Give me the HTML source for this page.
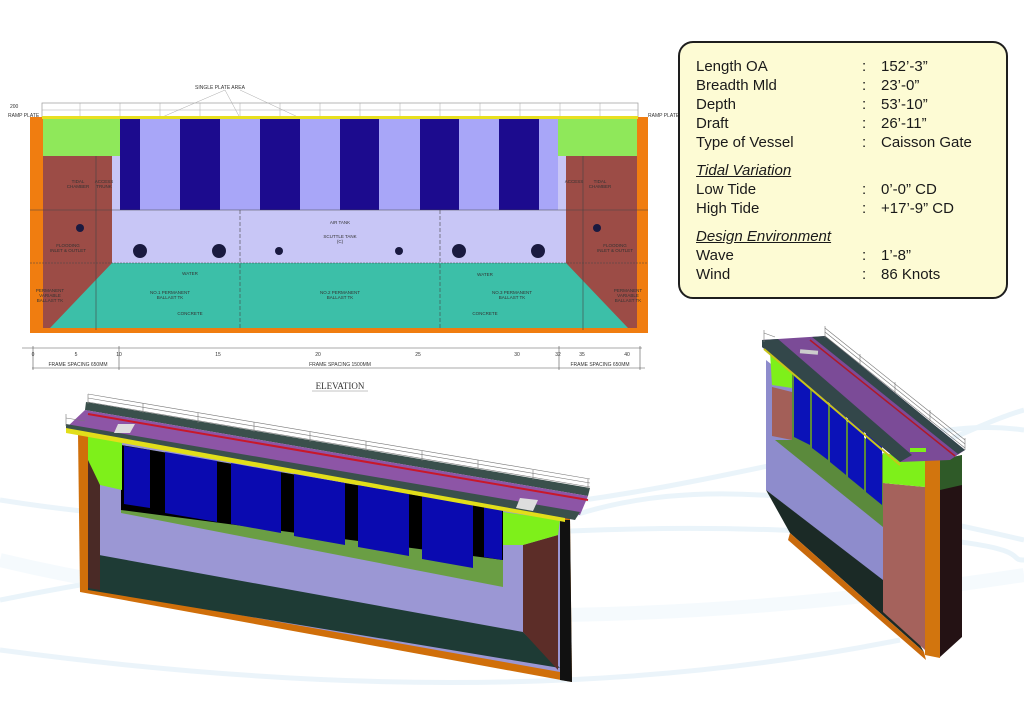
<!DOCTYPE html>
<html><head><meta charset="utf-8"><style>
html,body{margin:0;padding:0;background:#fff;}
body{width:1024px;height:723px;overflow:hidden;position:relative;font-family:"Liberation Sans",sans-serif;}
.box{position:absolute;left:678px;top:41px;width:326px;height:254px;background:#fdfbd4;border:2px solid #1e1e1e;border-radius:15px;}
.r{position:absolute;left:16px;font-size:15px;color:#1a1a1a;line-height:19px;white-space:nowrap;}
.r .c{position:absolute;left:166px;}
.r .v{position:absolute;left:185px;}
.h{font-style:italic;text-decoration:underline;}
svg{position:absolute;left:0;top:0;}
</style></head><body>
<svg width="1024" height="723" viewBox="0 0 1024 723">
<g fill="none" stroke="#e2f0f8" stroke-width="5" opacity="0.7">
<path d="M0 600 C200 560 500 520 780 530 S1000 560 1024 560"/>
<path d="M0 500 C250 540 500 520 700 480 S950 420 1024 430"/>
<path d="M560 520 C700 470 850 500 1024 540"/>
<path d="M0 650 C300 690 600 700 900 640"/>
<path d="M880 470 C950 440 990 420 1024 410"/>
</g>
<g fill="none" stroke="#eef6fb" stroke-width="14" opacity="0.6">
<path d="M0 560 C250 620 600 640 1024 575"/>
</g>
<rect x="42" y="103" width="596" height="14" fill="#fff" stroke="#999" stroke-width="0.7"/>
<g stroke="#aaa" stroke-width="0.5">
<line x1="80" y1="103" x2="80" y2="117"/><line x1="120" y1="103" x2="120" y2="117"/><line x1="160" y1="103" x2="160" y2="117"/><line x1="200" y1="103" x2="200" y2="117"/><line x1="240" y1="103" x2="240" y2="117"/><line x1="280" y1="103" x2="280" y2="117"/><line x1="320" y1="103" x2="320" y2="117"/><line x1="360" y1="103" x2="360" y2="117"/><line x1="400" y1="103" x2="400" y2="117"/><line x1="440" y1="103" x2="440" y2="117"/><line x1="480" y1="103" x2="480" y2="117"/><line x1="520" y1="103" x2="520" y2="117"/><line x1="560" y1="103" x2="560" y2="117"/><line x1="600" y1="103" x2="600" y2="117"/>
<line x1="42" y1="110" x2="638" y2="110"/>
<line x1="160" y1="118" x2="225" y2="90"/><line x1="225" y1="90" x2="240" y2="118"/><line x1="240" y1="90" x2="300" y2="118"/>
</g>
<text x="195" y="89" font-size="5" fill="#333">SINGLE PLATE AREA</text>
<text x="10" y="108" font-size="5" fill="#333">200</text>
<text x="8" y="117" font-size="5" fill="#333">RAMP PLATE</text>
<text x="648" y="117" font-size="5" fill="#333">RAMP PLATE</text>
<rect x="30" y="117" width="618" height="216" fill="#f07d10"/>
<rect x="42" y="116" width="596" height="3" fill="#e8e020"/>
<rect x="43" y="119" width="594" height="208" fill="#c8c6f6"/>
<rect x="43" y="119" width="77" height="37" fill="#8fe85a"/>
<rect x="558" y="119" width="79" height="37" fill="#8fe85a"/>
<rect x="43" y="156" width="69" height="172" fill="#9c4c46"/>
<rect x="566" y="156" width="71" height="172" fill="#9c4c46"/>
<rect x="120" y="119" width="438" height="91" fill="#a8a6f8"/>
<g fill="#1c0b8e">
<rect x="120" y="119" width="20" height="91"/><rect x="180" y="119" width="40" height="91"/><rect x="260" y="119" width="40" height="91"/><rect x="340" y="119" width="39" height="91"/><rect x="420" y="119" width="39" height="91"/><rect x="499" y="119" width="40" height="91"/>
</g>
<polygon points="112,263 566,263 628,328 50,328" fill="#3cbfa8"/>
<g stroke="#444" stroke-width="0.6" fill="none">
<line x1="30" y1="210" x2="648" y2="210"/><line x1="30" y1="263" x2="648" y2="263" stroke-dasharray="2,1"/>
<line x1="240" y1="210" x2="240" y2="330" stroke-dasharray="4,2"/><line x1="440" y1="210" x2="440" y2="330" stroke-dasharray="4,2"/>
<line x1="96" y1="156" x2="96" y2="330"/><line x1="583" y1="156" x2="583" y2="330"/>
</g>
<g fill="#1a1a40">
<circle cx="140" cy="251" r="7"/><circle cx="219" cy="251" r="7"/><circle cx="279" cy="251" r="4"/><circle cx="399" cy="251" r="4"/><circle cx="459" cy="251" r="7"/><circle cx="538" cy="251" r="7"/><circle cx="80" cy="228" r="4"/><circle cx="597" cy="228" r="4"/>
</g>
<g font-size="4.5" fill="#333" text-anchor="middle">
<text x="78" y="183">TIDAL</text><text x="78" y="188">CHAMBER</text><text x="104" y="183">ACCESS</text><text x="104" y="188">TRUNK</text>
<text x="574" y="183">ACCESS</text><text x="600" y="183">TIDAL</text><text x="600" y="188">CHAMBER</text>
<text x="340" y="224">AIR TANK</text><text x="340" y="238">SCUTTLE TANK</text><text x="340" y="243">(C)</text>
<text x="68" y="247">FLOODING</text><text x="68" y="252">INLET &amp; OUTLET</text><text x="615" y="247">FLOODING</text><text x="615" y="252">INLET &amp; OUTLET</text>
<text x="190" y="275">WATER</text><text x="485" y="276">WATER</text>
<text x="170" y="294">NO.1 PERMANENT</text><text x="170" y="299">BALLAST TK</text><text x="340" y="294">NO.2 PERMANENT</text><text x="340" y="299">BALLAST TK</text><text x="512" y="294">NO.3 PERMANENT</text><text x="512" y="299">BALLAST TK</text>
<text x="190" y="315">CONCRETE</text><text x="485" y="315">CONCRETE</text>
<text x="50" y="292">PERMANENT</text><text x="50" y="297">VARIABLE</text><text x="50" y="302">BALLAST TK</text>
<text x="628" y="292">PERMANENT</text><text x="628" y="297">VARIABLE</text><text x="628" y="302">BALLAST TK</text>
</g>
<g stroke="#555" stroke-width="0.6">
<line x1="22" y1="348" x2="642" y2="348"/><line x1="32" y1="368" x2="645" y2="368"/>
<line x1="33" y1="346" x2="33" y2="370"/><line x1="119" y1="346" x2="119" y2="370"/><line x1="559" y1="346" x2="559" y2="370"/><line x1="640" y1="346" x2="640" y2="370"/>
</g>
<g font-size="5" fill="#333" text-anchor="middle">
<text x="33" y="356">0</text><text x="76" y="356">5</text><text x="119" y="356">10</text><text x="218" y="356">15</text><text x="318" y="356">20</text><text x="418" y="356">25</text><text x="517" y="356">30</text><text x="558" y="356">32</text><text x="582" y="356">35</text><text x="627" y="356">40</text>
<text x="78" y="366">FRAME SPACING 650MM</text><text x="340" y="366">FRAME SPACING 1500MM</text><text x="600" y="366">FRAME SPACING 650MM</text>
</g>
<text x="340" y="389" font-family="Liberation Serif" font-size="9" fill="#333" text-anchor="middle">ELEVATION</text>
<line x1="312" y1="391" x2="368" y2="391" stroke="#888" stroke-width="0.5"/>

<polygon points="78,433 570,518 572,682 80,592" fill="#d06f0a"/>
<polygon points="88,436 560,520 560,672 88,588" fill="#9b97d4"/>
<polygon points="88,553 523,632 560,668 88,590" fill="#1e3b35"/>
<polygon points="88,438 100,440 100,590 88,588" fill="#4a2a26"/>
<polygon points="523,545 558,535 558,670 523,632" fill="#5c2d28"/>
<polygon points="560,520 570,520 572,682 560,680" fill="#111"/>
<polygon points="121,445 503,510 503,587 121,513" fill="#6a9e44"/>
<polygon points="121,445 503,510 503,560 121,510" fill="#000"/>
<g fill="#0a0ab0">
<polygon points="124,446 150,450 150,508 124,504"/>
<polygon points="165,452 217,461 217,522 165,513"/>
<polygon points="231,463 281,472 281,533 231,524"/>
<polygon points="294,474 345,483 345,545 294,536"/>
<polygon points="358,485 409,494 409,556 358,547"/>
<polygon points="422,496 473,505 473,568 422,559"/>
<polygon points="484,507 502,510 502,560 484,557"/>
</g>
<polygon points="88,436 122,441 122,490 100,485 88,460" fill="#7ef01a"/>
<polygon points="503,512 560,520 558,535 523,545 503,545" fill="#7ef01a"/>
<polygon points="86,402 590,488 588,496 85,410" fill="#3a504c"/>
<polygon points="85,410 588,496 580,515 66,428" fill="#8d55a6"/>
<line x1="88" y1="414" x2="588" y2="500" stroke="#c8182a" stroke-width="2"/>
<polygon points="66,424 580,512 575,520 66,430" fill="#3a504c"/>
<polygon points="66,428 565,518 565,522 66,433" fill="#e2de1a"/>
<polygon points="118,424 135,424 130,433 114,433" fill="#ddd"/>
<polygon points="520,498 538,500 533,511 516,508" fill="#ddd"/>
<g stroke="#777" stroke-width="0.6" fill="none">
<line x1="88" y1="394" x2="590" y2="479"/><line x1="88" y1="398" x2="590" y2="483"/><line x1="88" y1="402" x2="590" y2="487"/>
<line x1="88" y1="394" x2="88" y2="404"/><line x1="143" y1="403" x2="143" y2="413"/><line x1="198" y1="413" x2="198" y2="423"/><line x1="254" y1="422" x2="254" y2="432"/><line x1="310" y1="432" x2="310" y2="442"/><line x1="366" y1="441" x2="366" y2="451"/><line x1="422" y1="451" x2="422" y2="461"/><line x1="478" y1="460" x2="478" y2="470"/><line x1="533" y1="470" x2="533" y2="480"/><line x1="588" y1="479" x2="588" y2="489"/>
<line x1="66" y1="418" x2="85" y2="421"/><line x1="66" y1="414" x2="66" y2="426"/>
</g>

<polygon points="766,360 885,455 885,583 766,490" fill="#8e8ccc"/>
<polygon points="766,490 883,580 924,652 790,533" fill="#1b2a26"/>
<polygon points="790,533 924,652 926,660 788,540" fill="#c96a0c"/>
<polygon points="772,387 792,392 792,440 772,436" fill="#a35f58"/>
<polygon points="770,352 792,362 792,388 772,385" fill="#7ef01a"/>
<polygon points="792,370 883,455 883,527 775,440 792,440" fill="#5b8a3c"/>
<g fill="#0b12b8">
<polygon points="794,372 810,384 810,445 794,437"/>
<polygon points="812,386 828,399 828,460 812,448"/>
<polygon points="830,400 846,413 846,475 830,462"/>
<polygon points="848,415 864,428 864,490 848,477"/>
<polygon points="866,430 882,443 882,505 866,492"/>
</g>
<polygon points="883,483 925,487 925,650 883,612" fill="#a5625c"/>
<polygon points="883,453 925,460 925,487 883,483" fill="#7ef01a"/>
<polygon points="925,460 940,460 940,658 925,655" fill="#d2750e"/>
<polygon points="940,460 962,455 962,637 940,657" fill="#241214"/>
<polygon points="940,460 962,455 962,485 940,490" fill="#2f5a28"/>
<polygon points="762,340 825,336 965,450 950,460 900,462 762,347" fill="#7b4b97"/>
<polygon points="762,340 778,339 912,455 900,462 762,347" fill="#33474a"/>
<polygon points="812,337 825,336 965,450 958,454" fill="#33474a"/>
<line x1="810" y1="340" x2="955" y2="456" stroke="#b01828" stroke-width="1.5"/>
<line x1="764" y1="349" x2="900" y2="465" stroke="#c8c41a" stroke-width="2"/>
<rect x="800" y="350" width="18" height="4" fill="#ccc" transform="rotate(5 809 352)"/>
<rect x="910" y="448" width="16" height="4" fill="#7ef01a"/>
<g stroke="#777" stroke-width="0.6" fill="none">
<line x1="825" y1="328" x2="965" y2="440"/><line x1="825" y1="332" x2="965" y2="444"/><line x1="825" y1="336" x2="965" y2="448"/>
<line x1="825" y1="326" x2="825" y2="338"/><line x1="860" y1="354" x2="860" y2="365"/><line x1="895" y1="382" x2="895" y2="393"/><line x1="930" y1="410" x2="930" y2="421"/><line x1="965" y1="438" x2="965" y2="450"/>
<line x1="764" y1="330" x2="764" y2="342"/><line x1="764" y1="333" x2="775" y2="337"/>
</g>
</svg>
<div class="box">
<div class="r" style="top:14px">Length OA<span class="c">:</span><span class="v">152’-3”</span></div>
<div class="r" style="top:33px">Breadth Mld<span class="c">:</span><span class="v">23’-0”</span></div>
<div class="r" style="top:52px">Depth<span class="c">:</span><span class="v">53’-10”</span></div>
<div class="r" style="top:71px">Draft<span class="c">:</span><span class="v">26’-11”</span></div>
<div class="r" style="top:90px">Type of Vessel<span class="c">:</span><span class="v">Caisson Gate</span></div>
<div class="r h" style="top:118px">Tidal Variation</div>
<div class="r" style="top:137px">Low Tide<span class="c">:</span><span class="v">0’-0” CD</span></div>
<div class="r" style="top:156px">High Tide<span class="c">:</span><span class="v">+17’-9” CD</span></div>
<div class="r h" style="top:184px">Design Environment</div>
<div class="r" style="top:203px">Wave<span class="c">:</span><span class="v">1’-8”</span></div>
<div class="r" style="top:222px">Wind<span class="c">:</span><span class="v">86 Knots</span></div>
</div>
</body></html>
